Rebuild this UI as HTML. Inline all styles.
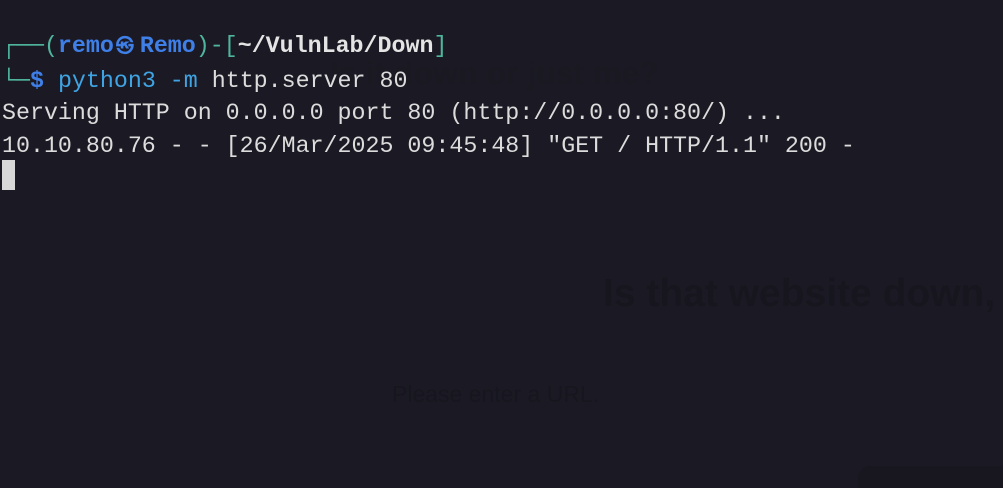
<!DOCTYPE html>
<html><head><meta charset="utf-8"><style>
html,body{margin:0;width:1003px;height:488px;overflow:hidden;background:#1b1a24;}
.wrap{position:absolute;left:0;top:0;width:1003px;height:488px;overflow:hidden;}
.bg{position:absolute;font-family:"Liberation Sans",sans-serif;color:#17161e;white-space:nowrap;}
.t{position:absolute;left:2px;top:30px;font-family:"Liberation Mono","DejaVu Sans Mono",monospace;font-size:23.3px;line-height:32.5px;color:#dcdcdc;white-space:pre;}
.g{color:#4fb59e}.b{color:#3f7fe8;font-weight:bold}.c{color:#3fa4e4}.w{color:#e4e4e4;font-weight:bold}
.k{display:inline-block;width:22px;text-align:center;font-size:18px;margin:0 4px 0 0;}
.cur{position:absolute;left:2px;top:160px;width:13px;height:30px;background:#d8d8d8;}
</style></head><body><div class="wrap">
<div class="bg" style="left:330px;top:55px;font-size:32px;font-weight:bold;color:#1a1922;">Is it down or just me?</div>
<div class="bg" style="left:603px;top:272px;font-size:39px;font-weight:bold;">Is that website down,</div>
<div class="bg" style="left:392px;top:381px;font-size:23px;">Please enter a URL.</div>
<div style="position:absolute;left:858px;top:466px;width:145px;height:22px;border-radius:12px 0 0 0;background:#18171f;"></div>
<div class="t"><span class="g">┌──(</span><span class="b">remo<span class="k">㉿</span>Remo</span><span class="g">)-[</span><span class="w">~/VulnLab/Down</span><span class="g">]</span>
<span class="g">└─</span><span class="b">$</span> <span class="c">python3 -m</span> http.server 80
Serving HTTP on 0.0.0.0 port 80 (http://0.0.0.0:80/) ...
10.10.80.76 - - [26/Mar/2025 09:45:48] "GET / HTTP/1.1" 200 -</div>
<div class="cur"></div>
</div></body></html>
